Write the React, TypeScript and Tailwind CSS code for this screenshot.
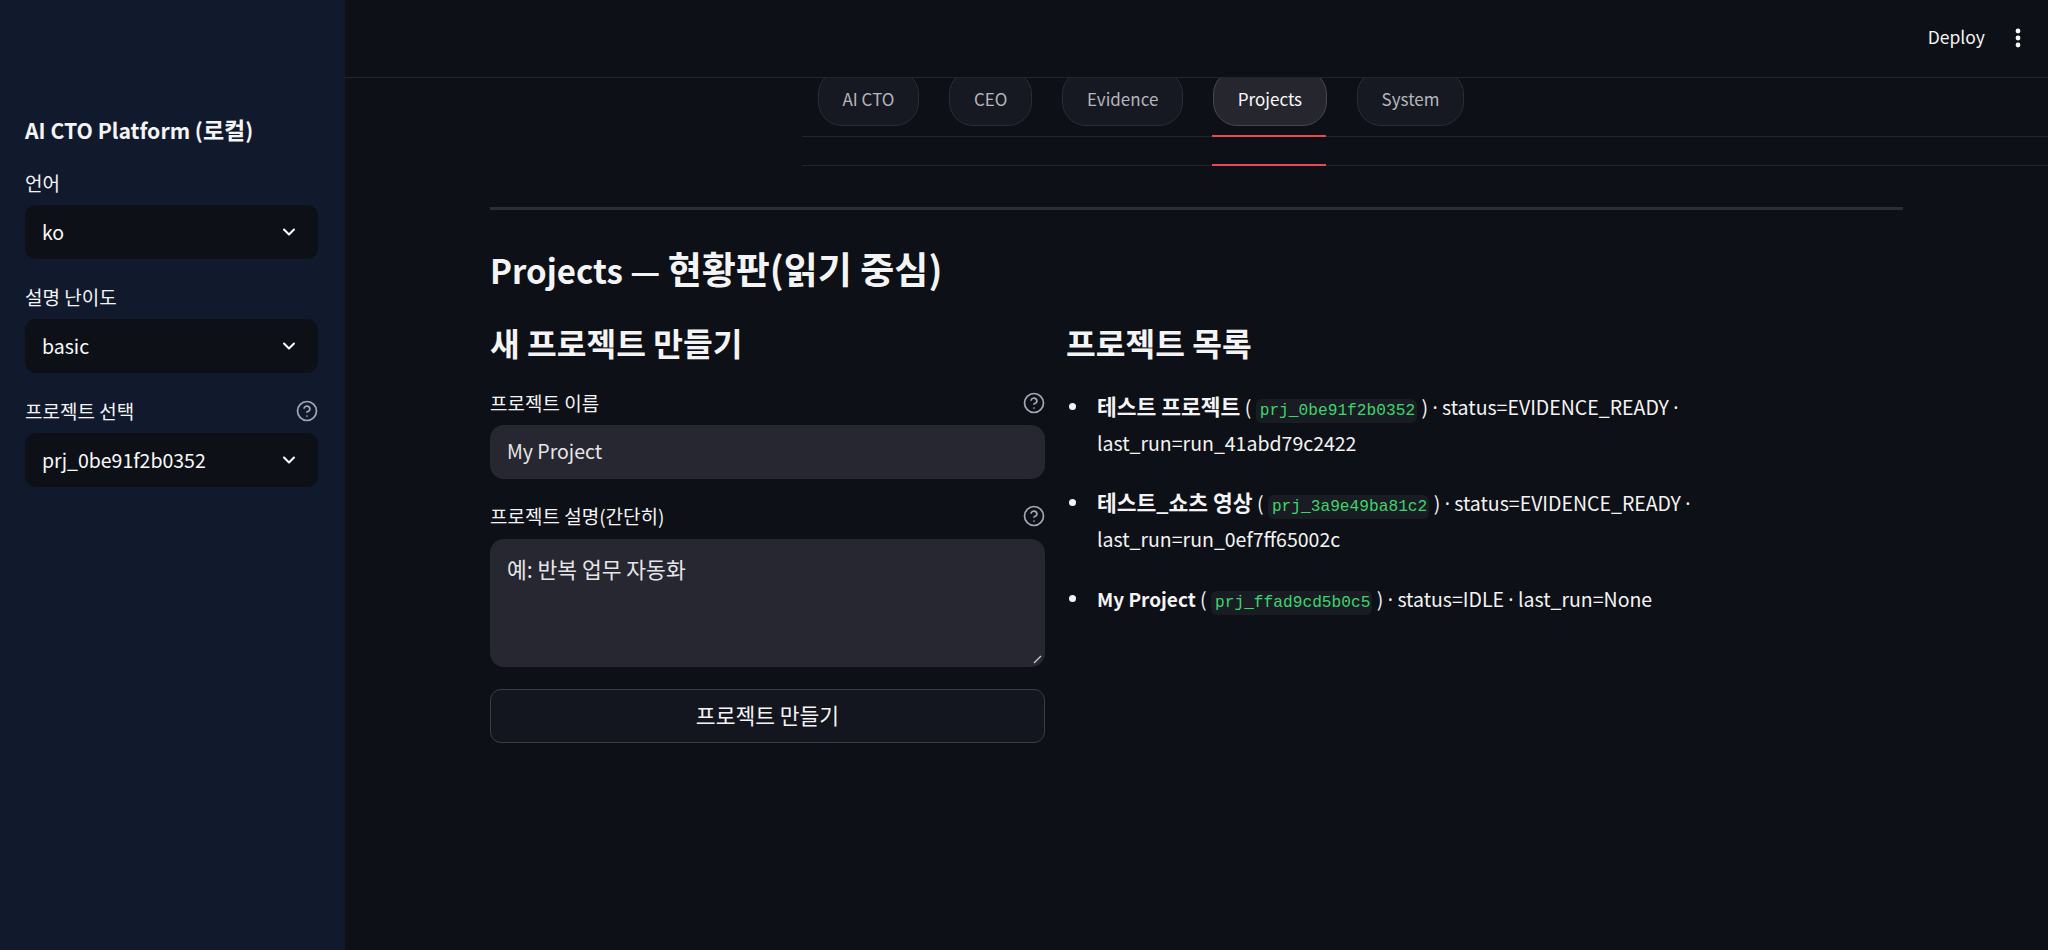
import { ChevronDown } from 'lucide-react'

const FONT = "font-['Noto_Sans_CJK_KR','Noto_Sans',sans-serif]"

const TABS = ['AI CTO', 'CEO', 'Evidence', 'Projects', 'System']

const PROJECTS = [
  { name: '테스트 프로젝트', nameSize: 'text-[21.5px]', id: 'prj_0be91f2b0352', status: 'EVIDENCE_READY', lastRun: 'run_41abd79c2422' },
  { name: '테스트_쇼츠 영상', nameSize: 'text-[21.5px]', id: 'prj_3a9e49ba81c2', status: 'EVIDENCE_READY', lastRun: 'run_0ef7ff65002c' },
  { name: 'My Project', nameSize: 'text-[19px]', id: 'prj_ffad9cd5b0c5', status: 'IDLE', lastRun: 'None' },
]

function HelpIcon() {
  return (
    <svg className="-mr-[1px]" width="24" height="24" viewBox="0 0 24 24" fill="none" stroke="#a3a8b4" strokeWidth="1.7" strokeLinecap="round" strokeLinejoin="round">
      <circle cx="12" cy="12" r="9.5" />
      <path d="M9.1 9a3 3 0 0 1 5.8 1c0 2-3 3-3 3" />
      <path d="M12 17h.01" />
    </svg>
  )
}

function FieldLabel({ text, help }: { text: string; help?: boolean }) {
  return (
    <div className="flex h-[22px] items-center justify-between text-[19px] leading-[22px] text-[#f4f4f4]">
      <span>{text}</span>
      {help && <HelpIcon />}
    </div>
  )
}

function SidebarSelect({ label, value, help }: { label: string; value: string; help?: boolean }) {
  return (
    <div className="mb-[27px]">
      <FieldLabel text={label} help={help} />
      <div className="mt-[11px] flex h-[54px] items-center justify-between rounded-[11px] bg-[#0d1017] pb-[1px] pl-[17px] pr-[19px] text-[19.5px] text-[#fafafa]">
        <span>{value}</span>
        <ChevronDown size={20} strokeWidth={2.5} color="#fafafa" />
      </div>
    </div>
  )
}

function ProjectItem({ name, nameSize, id, status, lastRun }: (typeof PROJECTS)[number]) {
  return (
    <li className="relative mb-[25px] pl-[31px] text-[19.5px] leading-[35px] text-[#f4f4f4]">
      <span className="absolute left-[3px] top-[14px] h-[7px] w-[7px] rounded-full bg-[#f4f4f4]" />
      <span className={`${nameSize} font-semibold leading-none`}>{name}</span>{' ( '}
      <code className="rounded-[6px] bg-[#1a1c24] py-[3px] pl-[4px] pr-[2px] font-['Liberation_Mono',monospace] text-[16.2px] leading-none text-[#3dd56d]">{id}</code>
      {' ) '}<span className="font-['Noto_Sans',sans-serif]">·</span>{` status=${status} `}<span className="font-['Noto_Sans',sans-serif]">·</span>{' '}
      {lastRun === 'None' ? null : <br />}
      last_run={lastRun}
    </li>
  )
}

export default function App() {
  return (
    <div className={`${FONT} flex h-[950px] w-[2048px] overflow-hidden bg-[#0d1017]`}>
      <aside className="w-[345px] shrink-0 bg-[#111a2c] pl-[25px] pr-[27px] pt-[115px]">
        <h2 className="mb-[28px] whitespace-nowrap text-[21.2px] font-semibold leading-[28px] text-[#f4f4f4]">
          AI CTO Platform (<span className="text-[23px]">로컬</span>)
        </h2>
        <SidebarSelect label="언어" value="ko" />
        <SidebarSelect label="설명 난이도" value="basic" />
        <SidebarSelect label="프로젝트 선택" value="prj_0be91f2b0352" help />
      </aside>

      <main className="flex min-w-0 flex-1 flex-col">
        <header className="flex h-[78px] shrink-0 items-center justify-end border-b border-[#24262d] pb-[2px] pr-[27px]">
          <span className="mr-[30px] text-[17.5px] text-[#f4f4f4]">Deploy</span>
          <svg width="6" height="20" viewBox="0 0 6 20" fill="#fafafa">
            <circle cx="3" cy="3" r="2.4" />
            <circle cx="3" cy="10" r="2.4" />
            <circle cx="3" cy="17" r="2.4" />
          </svg>
        </header>

        <div className="ml-[457px] mr-0">
          <div className="relative h-[59px] border-b border-[#24262d]">
            <div className="flex h-[48px] gap-[29.5px] overflow-hidden pl-[15.5px]">
              {TABS.map((tab) => (
                <div
                  key={tab}
                  className={[
                    'flex h-[56px] -mt-[8px] items-center rounded-[24px] border px-[24px] pt-[2px] text-[17px]',
                    tab === 'Projects'
                      ? 'border-[#45474d] bg-[#26272e] text-[#fafafa]'
                      : 'border-[#2a2d35] bg-[#161922] text-[#b4b6bb]',
                  ].join(' ')}
                >
                  {tab}
                </div>
              ))}
            </div>
            <div className="absolute -bottom-px left-[410px] h-[2px] w-[114px] bg-[#e8484f]" />
          </div>
          <div className="relative h-[29px] border-b border-[#24262d]">
            <div className="absolute -bottom-px left-[410px] h-[2px] w-[114px] bg-[#e8484f]" />
          </div>
        </div>

        <div className="ml-[145px] w-[1413px] pt-[41px]">
          <div className="h-[3px] bg-[#2c2d35]" />
          <h1 className="mt-[33px] whitespace-nowrap text-[33px] font-semibold leading-[50px] text-[#f4f4f4]">
            Projects — <span className="text-[37px]">현황판(읽기 중심)</span>
          </h1>
          <div className="mt-[25px] flex gap-[21px]">
            <section className="w-[555px] shrink-0">
              <h3 className="text-[32.3px] font-semibold leading-[44px] text-[#f4f4f4]">새 프로젝트 만들기</h3>
              <div className="mt-[28px]">
                <FieldLabel text="프로젝트 이름" help />
                <div className="mt-[11px] flex h-[54px] items-center rounded-[14px] bg-[#262730] px-[17px] pb-[2px] text-[19.5px] text-[#e6e6e8]">My Project</div>
              </div>
              <div className="mt-[26px]">
                <FieldLabel text="프로젝트 설명(간단히)" help />
                <div className="relative mt-[12px] h-[128px] rounded-[14px] bg-[#262730] px-[17px] pt-[15px] text-[21.5px] leading-[30px] text-[#e6e6e8]">
                  예: 반복 업무 자동화
                  <svg className="absolute bottom-[3px] right-[3px]" width="9" height="9" viewBox="0 0 9 9" stroke="#d0d0d4" strokeWidth="1.3">
                    <path d="M1 8 8 1" />
                  </svg>
                </div>
              </div>
              <button type="button" className="mt-[22px] flex h-[54px] w-full items-center justify-center rounded-[11px] border border-[#3b3d45] bg-[#13161e] pb-[2px] text-[21.5px] text-[#f4f4f4]">
                프로젝트 만들기
              </button>
            </section>
            <section className="min-w-0 flex-1">
              <h3 className="text-[32.3px] font-semibold leading-[44px] text-[#f4f4f4]">프로젝트 목록</h3>
              <ul className="mt-[25px]">
                {PROJECTS.map((p) => (
                  <ProjectItem key={p.id} {...p} />
                ))}
              </ul>
            </section>
          </div>
        </div>
      </main>
    </div>
  )
}
